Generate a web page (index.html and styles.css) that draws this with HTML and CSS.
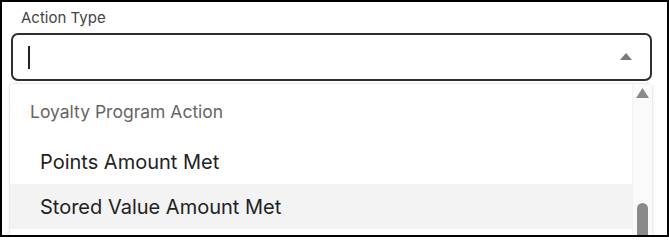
FILE: index.html
```html
<!DOCTYPE html>
<html lang="en">
<head>
<meta charset="utf-8">
<title>Action Type</title>
<link rel="stylesheet" href="styles.css">
</head>
<body>
<div class="frame">
  <div class="field">
    <label class="label">Action Type</label>
    <div class="input">
      <span class="caret"></span>
      <svg class="arrow" width="12" height="7" viewBox="0 0 12 7"><path d="M0 7 L6 0 L12 7 Z" fill="#7a7a7a"/></svg>
    </div>
  </div>
  <div class="panel">
    <ul class="list">
      <li class="group">Loyalty Program Action</li>
      <li class="item">Points Amount Met</li>
      <li class="item item-active">Stored Value Amount Met</li>
    </ul>
    <div class="scrollbar">
      <svg class="scroll-up" width="13" height="10" viewBox="0 0 13 10"><path d="M0 10 L6.5 0 L13 10 Z" fill="#8a8a8a"/></svg>
      <div class="thumb"></div>
    </div>
  </div>
</div>
</body>
</html>
```
FILE: styles.css
```css
html, body {
  margin: 0;
  padding: 0;
  background: #fff;
}
.frame {
  width: 669px;
  height: 237px;
  box-sizing: border-box;
  border: 2px solid #000;
  background: #fff;
  overflow: hidden;
  font-family: Inter, "Noto Sans", sans-serif;
}
.field {
  padding: 6px 15px 0 9px;
}
.label {
  display: block;
  margin-left: 10px;
  font-size: 15px;
  line-height: 20px;
  color: #444;
}
.input {
  margin-top: 5px;
  height: 48px;
  box-sizing: border-box;
  border: 2px solid #2e2e2e;
  border-radius: 7px;
  display: flex;
  align-items: center;
  justify-content: space-between;
  padding: 0 18px 0 15px;
}
.caret {
  width: 1.5px;
  height: 23px;
  background: #222;
}
.arrow {
  display: block;
  margin-top: -2px;
}
.panel {
  margin: 2px 0 0 7px;
  width: 644px;
  height: 160px;
  box-sizing: border-box;
  border: 1px solid #ececec;
  border-bottom: none;
  border-radius: 5px 5px 0 0;
  box-shadow: 0 1px 4px rgba(0,0,0,0.08);
  display: flex;
  background: #fff;
}
.list {
  list-style: none;
  margin: 0;
  padding: 0;
  flex: 1;
}
.group {
  height: 55px;
  display: flex;
  align-items: center;
  padding-left: 20px;
  font-size: 17.5px;
  color: #666;
}
.item {
  height: 45px;
  display: flex;
  align-items: center;
  padding-left: 30px;
  font-size: 20px;
  color: #222;
}
.item-active {
  background: #f3f3f3;
}
.scrollbar {
  width: 19px;
  background: #fafafa;
  border-left: 1px solid #f2f2f2;
  display: flex;
  flex-direction: column;
  align-items: center;
}
.scroll-up {
  display: block;
  margin-top: 4px;
}
.thumb {
  margin-top: 105px;
  width: 11px;
  height: 40px;
  background: #8a8a8a;
  border-radius: 6px 6px 0 0;
}
```
